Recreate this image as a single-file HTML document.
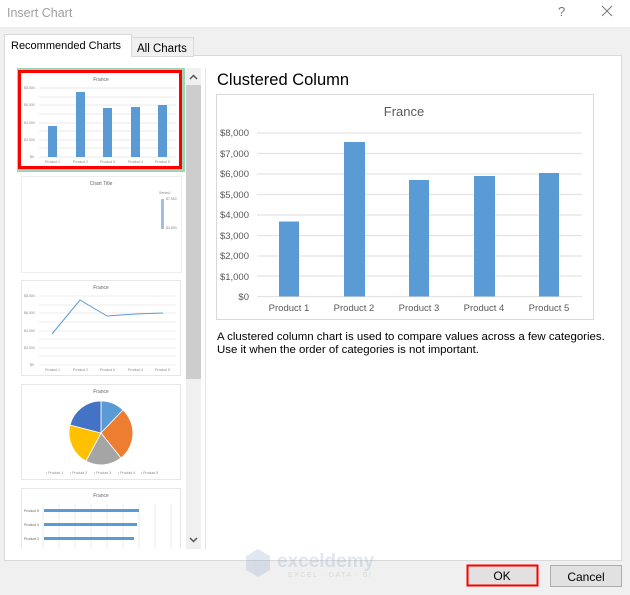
<!DOCTYPE html>
<html><head><meta charset="utf-8"><style>
html,body{margin:0;padding:0;width:630px;height:595px;overflow:hidden;background:#f0f0f0;font-family:"Liberation Sans","DejaVu Sans",sans-serif}
svg text{font-family:"Liberation Sans","DejaVu Sans",sans-serif}
</style></head><body>
<svg width="630" height="595" viewBox="0 0 630 595" xmlns="http://www.w3.org/2000/svg">
<rect x="0" y="0" width="630" height="27" fill="#fff"/>
<text x="7" y="17" font-size="12.5" fill="#a0a0a0">Insert Chart</text>
<text x="558" y="16" font-size="13" fill="#777">?</text>
<path d="M602 6 L612 16 M612 6 L602 16" stroke="#777" stroke-width="1"/>
<rect x="4.5" y="55.5" width="617" height="505" fill="#fff" stroke="#d9d9d9"/>
<rect x="131.5" y="37.5" width="62" height="19" fill="#f0f0f0" stroke="#d9d9d9"/>
<text x="137" y="52" font-size="11.5" fill="#000">All Charts</text>
<rect x="4.5" y="34.5" width="127" height="22" fill="#fff" stroke="#d9d9d9"/>
<rect x="5" y="54" width="126" height="4" fill="#fff"/>
<text x="11" y="49" font-size="11" fill="#000">Recommended Charts</text>
<rect x="186" y="68" width="15" height="481" fill="#f0f0f0"/>
<rect x="186" y="85" width="15" height="294" fill="#cdcdcd"/>
<path d="M190 79 L193.5 75.5 L197 79" stroke="#555" stroke-width="1.5" fill="none"/>
<path d="M190 538 L193.5 541.5 L197 538" stroke="#555" stroke-width="1.5" fill="none"/>
<rect x="17" y="68" width="168" height="104" fill="#9fd5b7"/>
<rect x="19.5" y="71.5" width="161" height="96" fill="#fff" stroke="#f00" stroke-width="3"/>
<text x="101" y="81" font-size="5" fill="#666" text-anchor="middle">France</text>
<g stroke="#e3e3e3" stroke-width="0.8">
<line x1="39" y1="88" x2="176" y2="88"/><line x1="39" y1="97" x2="176" y2="97"/><line x1="39" y1="105" x2="176" y2="105"/><line x1="39" y1="114" x2="176" y2="114"/><line x1="39" y1="123" x2="176" y2="123"/><line x1="39" y1="131" x2="176" y2="131"/><line x1="39" y1="140" x2="176" y2="140"/><line x1="39" y1="148" x2="176" y2="148"/><line x1="39" y1="157" x2="176" y2="157"/></g>
<g fill="#5b9bd5"><rect x="48" y="126" width="9" height="31"/><rect x="76" y="92" width="9" height="65"/><rect x="103" y="108" width="9" height="49"/><rect x="131" y="107" width="9" height="50"/><rect x="158" y="105" width="9" height="52"/></g>
<g font-size="3.5" fill="#888"><text x="24" y="89">$8,000</text><text x="24" y="106">$6,000</text><text x="24" y="124">$4,000</text><text x="24" y="141">$2,000</text><text x="30" y="158">$0</text>
<text x="45" y="163">Product 1</text><text x="73" y="163">Product 2</text><text x="100" y="163">Product 3</text><text x="128" y="163">Product 4</text><text x="155" y="163">Product 5</text></g>
<rect x="21.5" y="176.5" width="160" height="96" fill="#fff" stroke="#eee"/>
<text x="101" y="185" font-size="5" fill="#666" text-anchor="middle">Chart Title</text>
<text x="159" y="194" font-size="3.5" fill="#888">Series1</text>
<rect x="161" y="199" width="3" height="30" fill="#9cc0e6"/>
<text x="166" y="200" font-size="3.5" fill="#888">$7,550</text><text x="166" y="229" font-size="3.5" fill="#888">$3,693</text>
<rect x="21.5" y="280.5" width="159" height="95" fill="#fff" stroke="#e6e6e6"/>
<text x="101" y="289" font-size="5" fill="#666" text-anchor="middle">France</text>
<g stroke="#e6e6e6" stroke-width="0.8"><line x1="39" y1="296" x2="176" y2="296"/><line x1="39" y1="305" x2="176" y2="305"/><line x1="39" y1="313" x2="176" y2="313"/><line x1="39" y1="322" x2="176" y2="322"/><line x1="39" y1="331" x2="176" y2="331"/><line x1="39" y1="339" x2="176" y2="339"/><line x1="39" y1="348" x2="176" y2="348"/><line x1="39" y1="356" x2="176" y2="356"/><line x1="39" y1="365" x2="176" y2="365"/></g>
<polyline points="52,334 80,300 107,316 135,314 163,313" fill="none" stroke="#5b9bd5" stroke-width="1"/>
<g font-size="3.5" fill="#888"><text x="24" y="297">$8,000</text><text x="24" y="314">$6,000</text><text x="24" y="332">$4,000</text><text x="24" y="349">$2,000</text><text x="30" y="366">$0</text>
<text x="45" y="371">Product 1</text><text x="73" y="371">Product 2</text><text x="100" y="371">Product 3</text><text x="128" y="371">Product 4</text><text x="155" y="371">Product 5</text></g>
<rect x="21.5" y="384.5" width="159" height="95" fill="#fff" stroke="#e6e6e6"/>
<text x="101" y="393" font-size="5" fill="#666" text-anchor="middle">France</text>
<g transform="translate(101,433)" stroke="#fff" stroke-width="0.8">
<path d="M0 0 L0 -32 A32 32 0 0 1 22 -23 Z" fill="#5b9bd5"/>
<path d="M0 0 L22 -23 A32 32 0 0 1 20 25 Z" fill="#ed7d31"/>
<path d="M0 0 L20 25 A32 32 0 0 1 -15 28 Z" fill="#a5a5a5"/>
<path d="M0 0 L-15 28 A32 32 0 0 1 -31 -8 Z" fill="#ffc000"/>
<path d="M0 0 L-31 -8 A32 32 0 0 1 0 -32 Z" fill="#4472c4"/></g>
<g font-size="3.5" fill="#888"><text x="46" y="474">• Product 1</text><text x="70" y="474">• Product 2</text><text x="94" y="474">• Product 3</text><text x="118" y="474">• Product 4</text><text x="141" y="474">• Product 5</text></g>
<rect x="21.5" y="488.5" width="159" height="70" fill="#fff" stroke="#e6e6e6"/>
<rect x="5" y="549" width="200" height="11" fill="#fff"/>
<text x="101" y="497" font-size="5" fill="#666" text-anchor="middle">France</text>
<g stroke="#e6e6e6" stroke-width="0.8"><line x1="43" y1="504" x2="43" y2="549"/><line x1="59" y1="504" x2="59" y2="549"/><line x1="75" y1="504" x2="75" y2="549"/><line x1="91" y1="504" x2="91" y2="549"/><line x1="107" y1="504" x2="107" y2="549"/><line x1="123" y1="504" x2="123" y2="549"/><line x1="139" y1="504" x2="139" y2="549"/><line x1="155" y1="504" x2="155" y2="549"/><line x1="171" y1="504" x2="171" y2="549"/></g>
<g fill="#5b9bd5"><rect x="44" y="509" width="95" height="3"/><rect x="44" y="523" width="93" height="3"/><rect x="44" y="537" width="90" height="3"/></g>
<g font-size="3.5" fill="#666"><text x="24" y="512">Product 5</text><text x="24" y="526">Product 4</text><text x="24" y="540">Product 3</text></g>
<line x1="205.5" y1="68" x2="205.5" y2="549" stroke="#e6e6e6"/>
<text x="217" y="85" font-size="16.5" fill="#000">Clustered Column</text>
<rect x="216.5" y="94.5" width="377" height="225" fill="#fff" stroke="#d9d9d9"/>
<text x="404" y="116" font-size="13" fill="#595959" text-anchor="middle">France</text>
<g stroke="#e3e3e3" stroke-width="1.3">
<line x1="257" y1="133" x2="582" y2="133"/><line x1="257" y1="153.5" x2="582" y2="153.5"/><line x1="257" y1="174" x2="582" y2="174"/><line x1="257" y1="194.5" x2="582" y2="194.5"/><line x1="257" y1="215" x2="582" y2="215"/><line x1="257" y1="235.5" x2="582" y2="235.5"/><line x1="257" y1="256" x2="582" y2="256"/><line x1="257" y1="276" x2="582" y2="276"/><line x1="257" y1="296.5" x2="582" y2="296.5"/></g>
<g fill="#5b9bd5"><rect x="279" y="221.5" width="20" height="75"/><rect x="344" y="142" width="21" height="154.5"/><rect x="409" y="180" width="20" height="116.5"/><rect x="474" y="176" width="21" height="120.5"/><rect x="539" y="173" width="20" height="123.5"/></g>
<g font-size="9.5" fill="#595959" text-anchor="end"><text x="249" y="136">$8,000</text><text x="249" y="157">$7,000</text><text x="249" y="177">$6,000</text><text x="249" y="198">$5,000</text><text x="249" y="218">$4,000</text><text x="249" y="239">$3,000</text><text x="249" y="259">$2,000</text><text x="249" y="280">$1,000</text><text x="249" y="300">$0</text></g>
<g font-size="9.5" fill="#595959" text-anchor="middle"><text x="289" y="311">Product 1</text><text x="354" y="311">Product 2</text><text x="419" y="311">Product 3</text><text x="484" y="311">Product 4</text><text x="549" y="311">Product 5</text></g>
<text x="217" y="340" font-size="11.45" fill="#000">A clustered column chart is used to compare values across a few categories.</text>
<text x="217" y="353" font-size="11.45" fill="#000">Use it when the order of categories is not important.</text>
<g opacity="0.25"><path d="M258 549 L270 556 L270 570 L258 577 L246 570 L246 556 Z" fill="#8aa3c8"/>
<text x="277" y="567" font-size="19" font-weight="bold" fill="#8aa3c8">exceldemy</text>
<text x="288" y="577" font-size="7" fill="#999" letter-spacing="1.5">EXCEL · DATA · BI</text></g>
<rect x="467.5" y="565.5" width="70" height="20" fill="#e1e1e1" stroke="#f00" stroke-width="2"/>
<text x="502" y="580" font-size="12" fill="#000" text-anchor="middle">OK</text>
<rect x="550.5" y="565.5" width="71" height="21" fill="#e1e1e1" stroke="#adadad"/>
<text x="586" y="581" font-size="12" fill="#000" text-anchor="middle">Cancel</text>
</svg>
</body></html>
